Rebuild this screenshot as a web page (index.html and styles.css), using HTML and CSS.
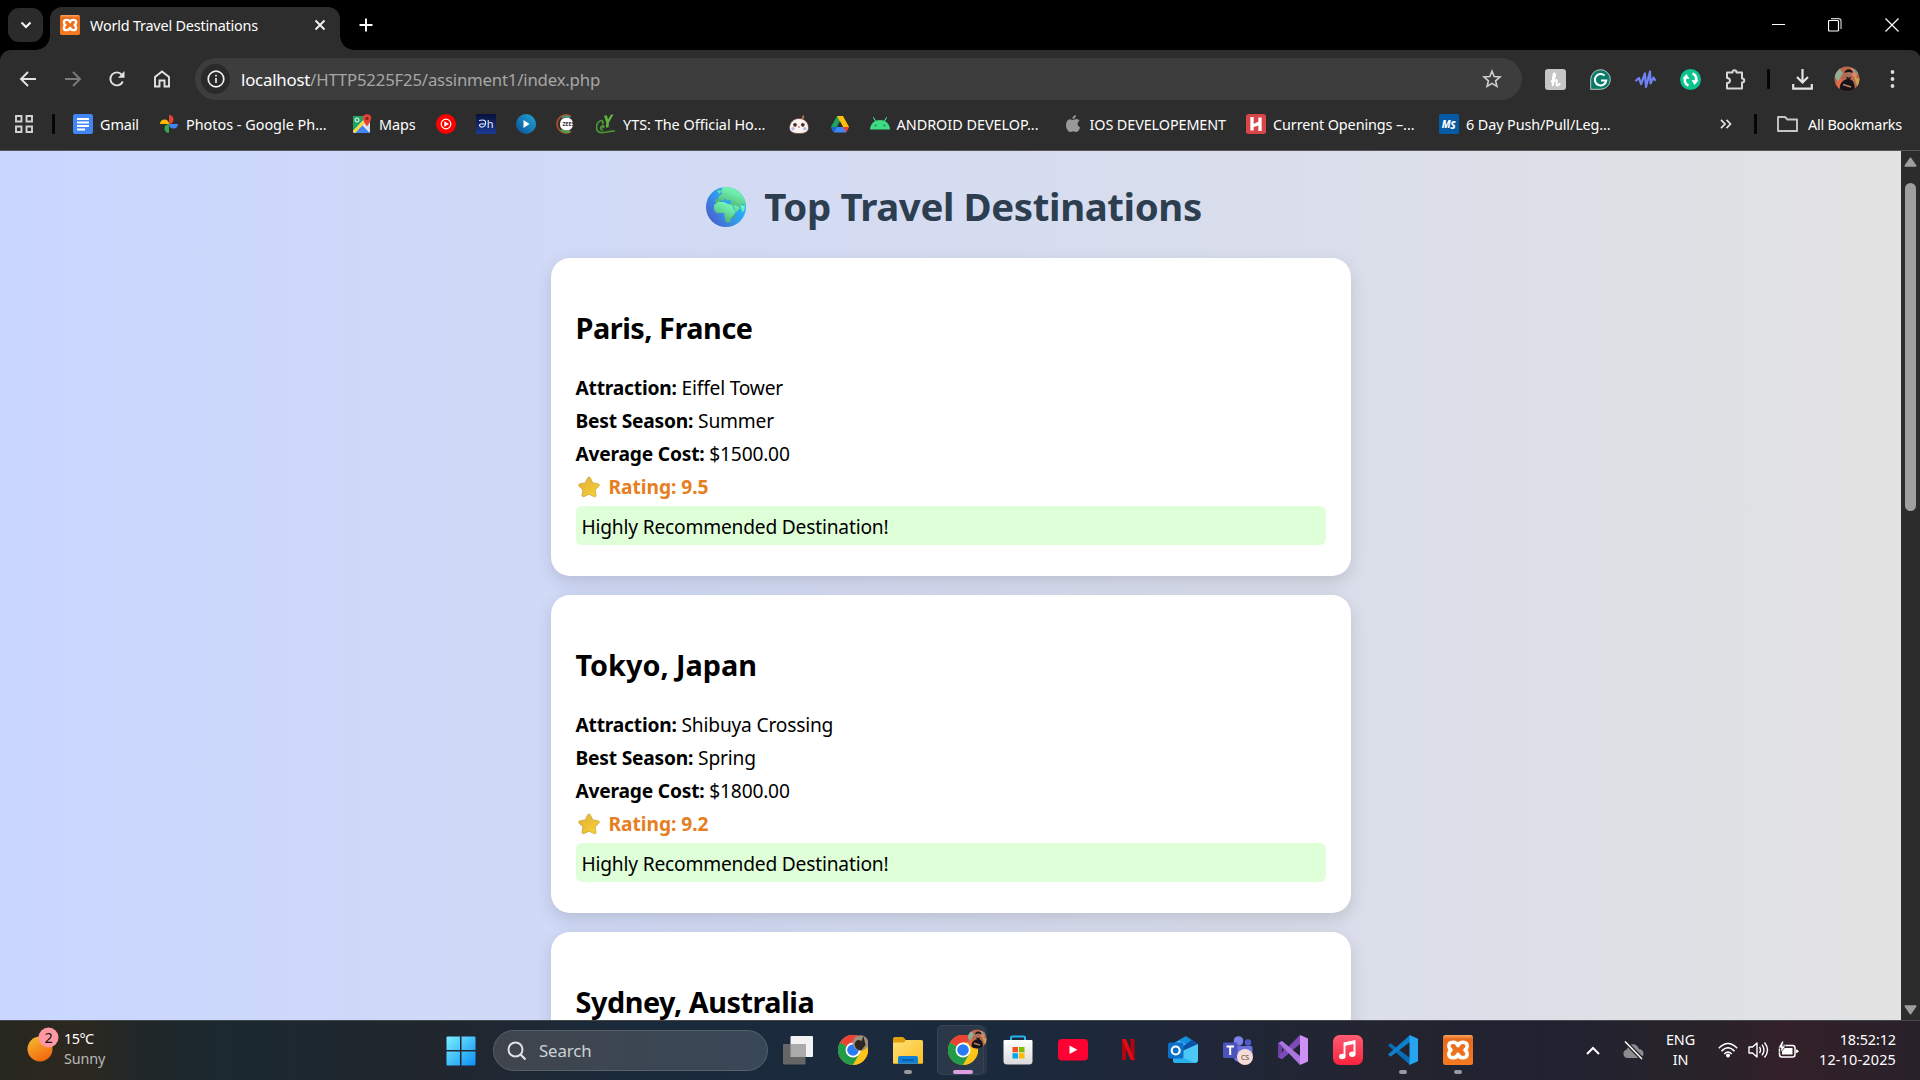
FILE: index.html
```
<!DOCTYPE html>
<html lang="en">
<head>
<meta charset="utf-8">
<title>World Travel Destinations</title>
<link rel="stylesheet" href="styles.css">
</head>
<body>
<svg class="defs" aria-hidden="true">
  <defs>
    <linearGradient id="gWin" x1="0" y1="0" x2="1" y2="1"><stop offset="0" stop-color="#7cf0ff"/><stop offset="1" stop-color="#0a90f5"/></linearGradient>
    <linearGradient id="gSun" x1="0.2" y1="0" x2="0.7" y2="1"><stop offset="0" stop-color="#f5b82e"/><stop offset="1" stop-color="#f2640c"/></linearGradient>
    <linearGradient id="gFolder" x1="0" y1="0" x2="1" y2="1"><stop offset="0" stop-color="#ffdf78"/><stop offset="1" stop-color="#fbbf22"/></linearGradient>
    <linearGradient id="gMusic" x1="0" y1="0" x2="0" y2="1"><stop offset="0" stop-color="#fb5c74"/><stop offset="1" stop-color="#fa233b"/></linearGradient>
    <linearGradient id="gEarth" x1="0.9" y1="0.2" x2="0.1" y2="0.8"><stop offset="0" stop-color="#22bdf8"/><stop offset="0.5" stop-color="#329bee"/><stop offset="1" stop-color="#4663cf"/></linearGradient>
    <linearGradient id="gLand" x1="0.8" y1="0" x2="0.3" y2="1"><stop offset="0" stop-color="#78feb6"/><stop offset="0.35" stop-color="#6be8a6"/><stop offset="1" stop-color="#4ba564"/></linearGradient>
    <linearGradient id="gStar" x1="0" y1="0" x2="1" y2="1"><stop offset="0" stop-color="#e3b437"/><stop offset="0.55" stop-color="#eec037"/><stop offset="1" stop-color="#f8db31"/></linearGradient>
    <linearGradient id="gDh" x1="0" y1="0" x2="0" y2="1"><stop offset="0" stop-color="#06103a"/><stop offset="1" stop-color="#1c3a94"/></linearGradient>
    <linearGradient id="gPlay" x1="1" y1="0" x2="0" y2="1"><stop offset="0" stop-color="#1fa8d8"/><stop offset="1" stop-color="#0d4f94"/></linearGradient>
    <linearGradient id="gBag" x1="0" y1="0" x2="0" y2="1"><stop offset="0" stop-color="#fff"/><stop offset="1" stop-color="#dadada"/></linearGradient>
    <linearGradient id="gXampp" x1="0" y1="0" x2="0" y2="1"><stop offset="0" stop-color="#f9a765"/><stop offset="0.14" stop-color="#e86a1a"/><stop offset="1" stop-color="#f47b23"/></linearGradient>
    <clipPath id="cAvatar"><circle cx="13" cy="13" r="12.5"/></clipPath>
    <clipPath id="cEarth"><circle cx="20" cy="20" r="20"/></clipPath>
  </defs>
  <symbol id="chrome" viewBox="0 0 30 30">
    <circle cx="15" cy="15" r="15" fill="#fbbc05"/>
    <path d="M15 15 L2 7.5 A15 15 0 0 1 28 7.500 Z" fill="#ea4335"/>
    <path d="M15 15 L2 7.5 A15 15 0 0 0 15 30 L21.500 18.700Z" fill="#229b4a"/>
    <path d="M15 7.500 H28 A15 15 0 0 1 15 30 L21.500 18.700 Z" fill="#fcc31a"/>
    <circle cx="15" cy="15" r="7.500" fill="#fff"/><circle cx="15" cy="15" r="5.800" fill="#2a7af3"/>
  </symbol>
  <symbol id="xampp" viewBox="0 0 30 30">
    <rect width="30" height="30" rx="2.500" fill="url(#gXampp)"/>
    <path d="M15 10.600C13.500 6 5.800 6.200 5.800 11c0 2 .9 3 2.200 4-1.300 1-2.200 2-2.200 4 0 4.800 7.700 5 9.200.4 1.500 4.600 9.200 4.400 9.200-.4 0-2-.9-3-2.200-4 1.300-1 2.200-2 2.200-4 0-4.800-7.700-5-9.200-.4z" fill="none" stroke="#fff" stroke-width="3.600" stroke-linejoin="round"/>
  </symbol>
  <symbol id="avatar" viewBox="0 0 26 26">
    <g clip-path="url(#cAvatar)">
      <rect width="26" height="26" fill="#b9694f"/><path d="M0 9l5-7 4 5-5 9z" fill="#8fae92"/><path d="M17 2l7 3-2 7-5-3z" fill="#e0876a"/><path d="M2 17l5-5 2 4-4 7z" fill="#e8694a"/><path d="M20 11l6 2-2 9z" fill="#c9a44c"/><path d="M19 3l3-2 3 6-3 1z" fill="#6f9a8a"/>
      <path d="M6 26c-1-7 1-12 8-13 6 0 7 6 7 13z" fill="#17131a"/><circle cx="14.500" cy="8.500" r="3.600" fill="#a8705a"/><path d="M10.500 7c0-5 8.500-5 8.500 0-3-1.500-5.500-1.500-8.500 0zM12 10.500c1.500 1.500 3.500 1.500 5 0l-1 3h-3z" fill="#1b1415"/><path d="M9 18.500l8 2.500" stroke="#bb8064" stroke-width="1.800"/>
    </g>
  </symbol>
  <symbol id="star" viewBox="0 0 22 22"><path d="M11 1c.8 0 1.200.6 1.500 1.200l2.300 4.700 5.100.8c1.400.2 1.900 1.500.9 2.500l-3.700 3.700.9 5.200c.2 1.400-.9 2.100-2.100 1.500L11 18.200l-4.900 2.400c-1.200.6-2.300-.1-2.100-1.500l.9-5.200-3.700-3.700c-1-1-.5-2.300.9-2.500l5.100-.8 2.300-4.700C9.800 1.600 10.200 1 11 1z" fill="url(#gStar)" stroke="#c99a33" stroke-width=".7"/></symbol>
</svg>

<header class="tabstrip">
  <button class="tab-search"><svg width="12" height="8" viewBox="0 0 12 8"><path d="M1.500 1.500L6 6l4.500-4.500" fill="none" stroke="#fff" stroke-width="2"/></svg></button>
  <div class="tab">
    <svg width="20" height="20"><use href="#xampp"/></svg>
    <span class="tab-title">World Travel Destinations</span>
    <svg class="tab-close" width="12" height="12" viewBox="0 0 12 12"><path d="M1.500 1.500l9 9M10.500 1.500l-9 9" stroke="#f0f0f0" stroke-width="1.900"/></svg>
  </div>
  <svg class="new-tab" width="14" height="14" viewBox="0 0 14 14"><path d="M7 .5v13M.5 7h13" stroke="#fff" stroke-width="1.900"/></svg>
  <div class="window-buttons">
    <svg width="14" height="14" viewBox="0 0 14 14"><path d="M0 6.500h13" stroke="#fff"/></svg>
    <svg width="14" height="14" viewBox="0 0 14 14"><rect x=".5" y="2.500" width="10" height="10.500" rx="1" fill="none" stroke="#fff" stroke-width="1.200"/><path d="M3 .7h7.500q2.500 0 2.500 2.500V11" fill="none" stroke="#ccc" stroke-width="1.200"/></svg>
    <svg width="14" height="14" viewBox="0 0 14 14"><path d="M.5 .5l13 13M13.500 .5l-13 13" stroke="#fff" stroke-width="1.200"/></svg>
  </div>
</header>

<nav class="toolbar">
  <div class="nav-buttons">
    <svg width="18" height="18" viewBox="0 0 18 18"><path d="M17 9H2.500M9 2L2 9l7 7" fill="none" stroke="#e3e3e3" stroke-width="1.900"/></svg>
    <svg width="18" height="18" viewBox="0 0 18 18"><path d="M1 9h14.500M9 2l7 7-7 7" fill="none" stroke="#7b7b7b" stroke-width="1.900"/></svg>
    <svg width="18" height="18" viewBox="0 0 18 18"><path d="M14.800 11.500A6.500 6.500 0 1 1 13.800 4.600L15.500 6.500" fill="none" stroke="#e3e3e3" stroke-width="1.900"/><path d="M16.500 1v6.700H10z" fill="#e3e3e3"/></svg>
    <svg width="18" height="18" viewBox="0 0 18 18"><path d="M2 16.500V7l7-5.500L16 7v9.500h-4.500v-6h-5v6z" fill="none" stroke="#e3e3e3" stroke-width="1.900"/></svg>
  </div>
  <div class="omnibox">
    <span class="site-info"><svg width="18" height="18" viewBox="0 0 18 18"><circle cx="9" cy="9" r="7.800" fill="none" stroke="#eee" stroke-width="1.700"/><path d="M9 8v5M9 4.800v1.700" stroke="#eee" stroke-width="1.700"/></svg></span>
    <span class="url"><b>localhost</b>/HTTP5225F25/assinment1/index.php</span>
    <svg width="20" height="20" viewBox="0 0 20 20"><path d="M10 2.200l2.200 5.300 5.800.5-4.400 3.800 1.300 5.600L10 14.400l-4.900 3 1.300-5.600L2 8l5.800-.5z" fill="none" stroke="#cfcfcf" stroke-width="1.600"/></svg>
  </div>
  <div class="extensions">
    <svg width="21" height="21" viewBox="0 0 21 21"><rect width="21" height="21" rx="3" fill="#c5c5c5"/><path d="M6.500 12.500C9.500 10 11 6 9.700 4.500 8 3.500 8 10 7.700 17c.5-4 2-6 3.500-6 1.800.2-.8 5.300 1 5.600 1 0 1.800-.8 2.500-1.800" fill="none" stroke="#fff" stroke-width="1.900" stroke-linecap="round"/></svg>
    <svg width="21" height="21" viewBox="0 0 21 21"><path d="M.7 10.500A9.800 9.800 0 1 1 10.500 20.300H.7z" fill="#087a69" stroke="#b9c9c5" stroke-width="1"/><path d="M14.500 6.600A5.700 5.700 0 1 0 16.200 11.500H11" fill="none" stroke="#fff" stroke-width="2.100"/></svg>
    <svg width="21" height="21" viewBox="0 0 21 21"><path d="M1.200 11.500L4 9l2 6L10 4.500 11 18 15 2.500l.5 12 3-6 1.500 2.500" fill="none" stroke="#6f83f5" stroke-width="2.200" stroke-linecap="round" stroke-linejoin="round"/></svg>
    <svg width="21" height="21" viewBox="0 0 21 21"><circle cx="10.500" cy="10.500" r="10.500" fill="#0cc28f"/><path d="M8.500 16.500C4.500 15 4 11 5.500 8.500M12.500 4.500c4 1.500 4.500 5.500 3 8" fill="none" stroke="#fff" stroke-width="2.600"/><path d="M2.500 9.500l4-4.500 3 5zM18.500 11.500l-4 4.500-3-5z" fill="#fff"/></svg>
    <svg width="21" height="21" viewBox="0 0 21 21"><path d="M2 3.500h5.500c0-3 4-3 4 0H17v6c3 0 3 4 0 4V19.500H2V14c4 0 4-5 0-5z" fill="none" stroke="#d6d6d6" stroke-width="2" stroke-linejoin="round"/></svg>
    <i class="bar"></i>
    <svg width="21" height="21" viewBox="0 0 21 21"><path d="M10.500 0v13.500M5 8l5.500 5.500L16 8M1.200 15v4.700h18.600V15" fill="none" stroke="#e3e3e3" stroke-width="2.200"/></svg>
    <svg width="26" height="26"><use href="#avatar"/></svg>
    <svg width="5" height="18" viewBox="0 0 5 18"><circle cx="2.500" cy="2" r="1.900" fill="#ddd"/><circle cx="2.500" cy="9" r="1.900" fill="#ddd"/><circle cx="2.500" cy="16" r="1.900" fill="#ddd"/></svg>
  </div>
</nav>

<nav class="bookmarks">
  <svg class="apps" width="18" height="18" viewBox="0 0 18 18"><path d="M1 1h5.500v5.500H1zM11.500 1H17v5.500h-5.500zM1 11.500h5.500V17H1zM11.500 11.500H17V17h-5.500z" fill="none" stroke="#d2d2d2" stroke-width="1.900"/></svg>
  <i class="bar"></i>
  <a class="bm w86"><svg width="20" height="20" viewBox="0 0 20 20"><rect width="20" height="20" rx="2" fill="#4285f4"/><path d="M4 5h12M4 8.500h12M4 12h12M4 15.500h8" stroke="#fff" stroke-width="2"/></svg>Gmail</a>
  <a class="bm w193 wide"><svg width="20" height="20" viewBox="0 0 20 20"><path d="M10 10V1a4.500 4.500 0 0 1 0 9z" fill="#ea4335"/><path d="M10 10h9a4.500 4.500 0 0 1-9 0z" fill="#4285f4"/><path d="M10 10v9a4.500 4.500 0 0 1 0-9z" fill="#34a853"/><path d="M10 10H1a4.500 4.500 0 0 1 9 0z" fill="#fbbc04"/></svg>Photos - Google Ph...</a>
  <a class="bm w84"><svg width="20" height="20" viewBox="0 0 20 20"><rect x="1" y="2" width="17" height="17" rx="1.500" fill="#e8eaed"/><path d="M1 3.500q0-1.500 1.500-1.500H15L1 17z" fill="#1fa463"/><path d="M3 19l7-8 8 8z" fill="#4285f4"/><path d="M1 17L14 4l2 2L3 19z" fill="#fdd835"/><path d="M11 10l7 7V9z" fill="#dadce0"/><circle cx="5" cy="6" r="2" fill="none" stroke="#fff"/><path d="M15 .3c6 0 5 6 0 12-5-6-6-12 0-12z" fill="#ea4335"/><circle cx="15" cy="4.500" r="1.700" fill="#8c2219"/></svg>Maps</a>
  <a class="bm w40"><svg width="20" height="20" viewBox="0 0 20 20"><circle cx="10" cy="10" r="10" fill="#f00"/><circle cx="10" cy="10" r="4.800" fill="none" stroke="#fff" stroke-width="1.200"/><path d="M8.300 7.300v5.400L13 10z" fill="#fff"/></svg></a>
  <a class="bm w40"><svg width="20" height="20" viewBox="0 0 20 20"><rect width="20" height="20" fill="url(#gDh)"/><path d="M3 6.500c6-1.500 7 .5 6.500 3.500-.5 3.500-5.500 4-6 1.500-.2-1.500 2-2 5-1.500" fill="none" stroke="#dfe8ff" stroke-width="1.200"/><text x="14" y="13.800" text-anchor="middle" class="dh">h</text></svg></a>
  <a class="bm w40"><svg width="20" height="20" viewBox="0 0 20 20"><circle cx="10" cy="10" r="10" fill="url(#gPlay)"/><path d="M7.500 6v8l6-4z" fill="#fff"/></svg></a>
  <a class="bm w40"><svg width="20" height="20" viewBox="0 0 20 20"><path d="M15 2.500A9 9 0 1 0 15 17.500" fill="none" stroke="#a4502e" stroke-width="1.800"/><path d="M14 3.500a7.500 7.500 0 0 0-8 0" stroke="#3aa88a" stroke-width="1.500" fill="none"/><path d="M5 16a8 8 0 0 0 9 1" stroke="#48a548" stroke-width="2" fill="none"/><circle cx="10.500" cy="10" r="6.600" fill="#fff"/><text x="12.500" y="12.200" text-anchor="middle" class="beans">ZEES</text></svg></a>
  <a class="bm w192 wide"><svg width="20" height="20" viewBox="0 0 20 20"><path d="M8 1.500h3l1 4 3-5h2.500L13 8.500l-.5 5H9.800l.5-4.500z" fill="#5fb43c"/><path d="M5 6.500C-1 9-1 18 5 18.500c4 .5 7-1.500 14-1.500M5 6.500c2.500 0 2.500 3 1 3.500M6 14c3-1 2-3 0-2s-2 4 1 4.500" fill="none" stroke="#4d9a35" stroke-width="1.700"/></svg>YTS: The Official Ho...</a>
  <a class="bm w41"><svg width="20" height="20" viewBox="0 0 20 20"><path d="M12 5.500q3-1 2-4" fill="none" stroke="#b9794d" stroke-width="1.700"/><path d="M10 4.500C4 4.500.5 9 .5 14c0 3.500 3 5.500 9.500 5.500s9.500-2 9.500-5.500c0-5-3.500-9.500-9.500-9.500z" fill="#fdf4ef" stroke="#6b4038" stroke-width=".7"/><circle cx="6" cy="10.800" r="1.900" fill="#4b2e2a"/><circle cx="13.800" cy="10.800" r="1.900" fill="#4b2e2a"/><circle cx="4" cy="14.800" r="1.700" fill="#bdb8f5"/><circle cx="15.800" cy="14.800" r="1.700" fill="#bdb8f5"/><path d="M9 13h2" stroke="#b55"/></svg></a>
  <a class="bm w40"><svg width="20" height="20" viewBox="0 0 20 20"><path d="M7 2h6l-3 5.500-4.700 8.300L3.500 18 1 13z" fill="#1ea362"/><path d="M7 2h6l6 11h-6z" fill="#ffc107"/><path d="M1 13h18l-3 5.500H4z" fill="#4285f4"/><path d="M7 13l3-5.500L13 13z" fill="#2d2d2d"/><path d="M13 13h6l-3 5.500z" fill="#ea4335"/><path d="M7 13H1l3 5.500z" fill="#1967d2"/></svg></a>
  <a class="bm w193 wide"><svg width="20" height="20" viewBox="0 0 20 20"><path d="M0 15.500C.5 9 5 6 10 6s9.500 3 10 9.500z" fill="#3ddc84"/><path d="M5.500 7L3.300 3.300M14.500 7l2.200-3.700" stroke="#3ddc84" stroke-width="1.100"/><circle cx="5.600" cy="11.500" r="1" fill="#285"/><circle cx="14.400" cy="11.500" r="1" fill="#285"/></svg>ANDROID DEVELOP...</a>
  <a class="bm w183"><svg width="20" height="20" viewBox="0 0 20 20"><path d="M13 1c.2 2.200-1.700 4-3.500 4C9.200 3 11 1.200 13 1zM9.900 6c.8 0 1.800-1 3.400-1 1.300 0 2.500.7 3.200 1.800-2.800 1.500-2.300 5.500.6 6.600-.8 2.400-2.300 4.600-3.800 4.600-1.200 0-1.600-.8-3.100-.8s-2 .8-3.100.8C5 18 2.800 13.800 3 10.700 3.100 7.500 5 5.300 7 5.200 8.400 5.200 9.200 6 9.900 6z" fill="#999"/></svg>IOS DEVELOPEMENT</a>
  <a class="bm w193"><svg width="20" height="20" viewBox="0 0 20 20"><rect width="20" height="20" rx="2.500" fill="#d9464a"/><path d="M6 3v13.500M14 3.500V17M6 11.500c3 .5 5-1 8-3" fill="none" stroke="#fff" stroke-width="3.300"/></svg>Current Openings –...</a>
  <a class="bm w193"><svg width="20" height="20" viewBox="0 0 20 20"><rect width="20" height="20" rx="1.500" fill="#045aa4"/><text x="9.500" y="13.500" text-anchor="middle" class="ms">M<tspan dy="1.500">S</tspan></text></svg>6 Day Push/Pull/Leg...</a>
  <div class="bm-end">
    <svg width="12" height="10" viewBox="0 0 12 10"><path d="M1 .8L5 5 1 9.200M6.500 .8l4 4.200-4 4.200" fill="none" stroke="#e3e3e3" stroke-width="1.700"/></svg>
    <i class="bar"></i>
    <svg width="21" height="16" viewBox="0 0 21 16"><path d="M1 1h7l2.500 2.500H20V15H1z" fill="none" stroke="#c7c7c7" stroke-width="1.900" stroke-linejoin="round"/></svg>
    <span>All Bookmarks</span>
  </div>
</nav>

<div class="viewport">
  <main>
    <h1><svg width="40" height="40" viewBox="0 0 40 40"><circle cx="20" cy="20" r="20" fill="url(#gEarth)"/><g clip-path="url(#cEarth)" fill="url(#gLand)"><path d="M11 4l3-1 1 2-2 2zM17 0h14l9 10v9l-3-2-3 1-2 4-3-1-1-3-2 1-2-3 2-2-3-1-2 1-2-3-1 3-3-1-1 2-4 1-1-3 3-1 1-3 3-2-1-3z"/><path d="M8 18l4-3 6 0 4 2 4 1 2 5 2 1-3 5-2 2-1 4-3 1-2-3-1-7-7 0-3-3z"/><path d="M27 18l4 1 3 2-3 4-2-1zM34 18l5 1-1 5-2 1zM27 28l2-1v4l-2 1z"/></g></svg><span>Top Travel Destinations</span></h1>

    <section class="card">
      <h2>Paris, France</h2>
      <p><strong>Attraction:</strong> Eiffel Tower</p>
      <p><strong>Best Season:</strong> Summer</p>
      <p><strong>Average Cost:</strong> $1500.00</p>
      <p class="rating"><svg width="22" height="22"><use href="#star"/></svg>Rating: 9.5</p>
      <div class="note">Highly Recommended Destination!</div>
    </section>
    <section class="card">
      <h2 class="loose">Tokyo, Japan</h2>
      <p><strong>Attraction:</strong> Shibuya Crossing</p>
      <p><strong>Best Season:</strong> Spring</p>
      <p><strong>Average Cost:</strong> $1800.00</p>
      <p class="rating"><svg width="22" height="22"><use href="#star"/></svg>Rating: 9.2</p>
      <div class="note">Highly Recommended Destination!</div>
    </section>
    <section class="card">
      <h2>Sydney, Australia</h2>
    </section>
  </main>
  <div class="scrollbar">
    <svg width="13" height="10" viewBox="0 0 13 10"><path d="M6.500 1.200L11.800 9H1.200z" fill="#9f9f9f" stroke="#9f9f9f" stroke-width="1.500" stroke-linejoin="round"/></svg>
    <div class="track"><div class="thumb"></div></div>
    <svg width="13" height="10" viewBox="0 0 13 10"><path d="M6.500 8.800L1.200 1h10.600z" fill="#9f9f9f" stroke="#9f9f9f" stroke-width="1.500" stroke-linejoin="round"/></svg>
  </div>
</div>

<footer class="taskbar">
  <div class="weather">
    <svg width="34" height="36" viewBox="0 0 34 36"><circle cx="13" cy="22" r="12.500" fill="url(#gSun)"/><circle cx="21.500" cy="10.500" r="10" fill="#fe99a4"/><text x="21.500" y="15.500" text-anchor="middle" class="badge">2</text></svg>
    <div><div class="temp">15°C</div><div class="cond">Sunny</div></div>
  </div>
  <svg class="start" width="30" height="30" viewBox="0 0 30 30"><path d="M.5 1.500q0-1 1-1H14V14H.500zM15.500.500h13q1 0 1 1V14h-14zM.500 15.500H14v14H1.500q-1 0-1-1zM15.500 15.500h14v13q0 1-1 1h-13z" fill="url(#gWin)"/></svg>
  <div class="search"><svg width="20" height="20" viewBox="0 0 20 20"><circle cx="8.500" cy="8.500" r="7" fill="none" stroke="#dfe2e5" stroke-width="2"/><path d="M13.500 13.500l5 5" stroke="#dfe2e5" stroke-width="2.300"/></svg><span>Search</span></div>
  <div class="apps-row">
    <span class="app"><svg width="30" height="30" viewBox="0 0 30 30"><rect x="7.500" y="1" width="22.500" height="21" rx="1" fill="#f2f2f2"/><rect x="0" y="9" width="22.500" height="20.500" rx="1" fill="#666"/><rect x="7.500" y="9" width="15" height="13" fill="#aaa"/></svg></span>
    <span class="app"><svg width="30" height="30" viewBox="0 0 30 30"><use href="#chrome"/><g transform="translate(14.500 0)"><circle cx="8" cy="8" r="7.800" fill="#9c907c"/><path d="M2 9q2-6 7-3l2-5 2 9-4 5q-6 1-7-6z" fill="#302722"/></g></svg></span>
    <span class="app running"><svg width="30" height="30" viewBox="0 0 30 30"><path d="M0 4q0-2 2-2h8l3 3v4H0z" fill="#dfa10a"/><path d="M0 7.500h11l2-2.500h15.500q1.500 0 1.500 1.500V28q0 .8-.8.8H.800Q0 28.800 0 28z" fill="url(#gFolder)"/><path d="M5 28.800V23q0-2 2-2h16q2 0 2 2v5.800z" fill="#0f7fd6"/><path d="M9 25h12" stroke="#075094" stroke-width="1.200"/></svg></span>
    <span class="app active"><svg width="30" height="30"><use href="#chrome"/></svg><svg class="profile" width="20" height="20" viewBox="0 0 26 26"><use href="#avatar" width="26" height="26"/></svg></span>
    <span class="app"><svg width="30" height="30" viewBox="0 0 30 30"><path d="M8 7V2.500q0-1 1-1h12q1 0 1 1V7" fill="none" stroke="#26b4f0" stroke-width="2"/><path d="M.5 6q0-1 1-1h27q1 0 1 1v20q0 3.500-3.500 3.500H4Q.500 29.500.500 26z" fill="url(#gBag)"/><path d="M9.500 12H15v5.300H9.500z" fill="#f25022"/><path d="M16 12h5.500v5.300H16z" fill="#7fba00"/><path d="M9.500 18.200H15v5.300H9.500z" fill="#00a4ef"/><path d="M16 18.200h5.500v5.300H16z" fill="#ffb900"/></svg></span>
    <span class="app"><svg width="30" height="30" viewBox="0 0 30 30"><rect y="4" width="30" height="21.500" rx="4" fill="#ff0033"/><path d="M11.500 10.500v8.500l8-4.200z" fill="#fff"/></svg></span>
    <span class="app"><svg width="30" height="30" viewBox="0 0 30 30"><path d="M9 4h4v20.700l-4 .5zM17.500 4h4v21.200l-4-.5z" fill="#b1060f"/><path d="M9 4h4l8.500 21.200-4-.5z" fill="#e50914"/></svg></span>
    <span class="app"><svg width="30" height="30" viewBox="0 0 30 30"><path d="M4 9L17 1.500q.8-.4 1.600 0L30 9v9H4z" fill="#1490df"/><path d="M11 5.500l8 4.500-10 7-4-7z" fill="#54b8f5"/><path d="M24 5l6 4-13 9-6-4z" fill="#0b4fa8"/><path d="M30 9v16q0 3-3 3H8q-3 0-3-3v-5z" fill="#4bc8f7"/><path d="M5 18l22 10H8q-3 0-3-3z" fill="#2bb0ee"/><rect y="7.500" width="15.500" height="16" rx="2" fill="#0a70c9"/><circle cx="7.700" cy="15.500" r="4" fill="none" stroke="#fff" stroke-width="2.200"/></svg></span>
    <span class="app"><svg width="30" height="30" viewBox="0 0 30 30"><circle cx="15.500" cy="6" r="4.800" fill="#7b83eb"/><circle cx="25" cy="7.500" r="3.200" fill="#5059c9"/><path d="M9 11h19q1.500 0 1.500 1.500V19c0 5-3 6-7 5-2 5-11 4-12-2z" fill="#6a72dc"/><rect y="7.500" width="14.500" height="15.500" rx="1.500" fill="#4b53bc"/><path d="M3.500 11.500h7.500M7.200 11.500V20" stroke="#fff" stroke-width="2"/><circle cx="22" cy="22" r="8" fill="#f6dcd6"/><text x="22" y="24.700" text-anchor="middle" class="cs">CS</text></svg></span>
    <span class="app"><svg width="30" height="30" viewBox="0 0 30 30"><path d="M0 8l4-2v18l-4-2z" fill="#6c3fa4"/><path d="M4 6l6 5v8l-6 5-4-2 6-7-6-7z" fill="#7846b0"/><path d="M22 0v9L4 24l-4-2z" fill="#7d4bb6"/><path d="M4 6l18 15v9L1 8z" fill="#aa76de"/><path d="M22 0l8 3.500v23L22 30z" fill="#cf91f6"/></svg></span>
    <span class="app"><svg width="30" height="30" viewBox="0 0 30 30"><rect width="30" height="30" rx="6.500" fill="url(#gMusic)"/><path d="M11.500 21V8.500L21.500 6.500v12.500" fill="none" stroke="#fff" stroke-width="1.900"/><path d="M11 7.500l11-2.300v3.600l-11 2.300z" fill="#fff"/><ellipse cx="9.300" cy="21.500" rx="3.200" ry="2.700" fill="#fff"/><ellipse cx="19.300" cy="19.300" rx="3.200" ry="2.700" fill="#fff"/></svg></span>
    <span class="app running"><svg width="30" height="30" viewBox="0 0 30 30"><path d="M0 10.500L2.500 8.200 22 23v7z" fill="#0a6cb5"/><path d="M0 19.500l2.500 2.300L22 7V0z" fill="#0f80cb"/><path d="M21.500 0L30 3.700v22.600L21.500 30z" fill="#27a5f0"/></svg></span>
    <span class="app running"><svg width="30" height="30"><use href="#xampp"/></svg></span>
  </div>
  <div class="tray">
    <svg class="chev" width="14" height="9" viewBox="0 0 14 9"><path d="M1 8l6-6 6 6" fill="none" stroke="#fff" stroke-width="2"/></svg>
    <svg class="cloud" width="21" height="19" viewBox="0 0 21 19"><path d="M5 17c-6 0-6-8-1-8.500C5 2 14 1 16 8c6 0 6 9 0 9z" fill="#8c8c8e"/><path d="M2 .5l17 17.500" stroke="#262229" stroke-width="4"/><path d="M2 .5l17 17.500" stroke="#fff" stroke-width="1.500"/></svg>
    <div class="lang">ENG<br>IN</div>
    <svg class="wifi" width="20" height="16" viewBox="0 0 20 16"><g fill="none" stroke="#fff" stroke-width="1.500"><path d="M.8 6.300q9.200-9.600 18.400 0M3.500 9.200q6.500-7 13 0M6.300 12q3.700-4 7.400 0"/></g><circle cx="10" cy="13.500" r="2" fill="#fff"/></svg>
    <svg class="vol" width="21" height="18" viewBox="0 0 21 18"><g fill="none" stroke="#fff" stroke-width="1.400" stroke-linejoin="round"><path d="M1 6h3.500L9 2v14l-4.500-4H1zM11.500 6q2 3 0 6M14 3.700q4 5.300 0 10.600M16.500 1.500q6 7.500 0 15"/></g></svg>
    <svg class="batt" width="21" height="18" viewBox="0 0 21 18"><rect x="1.500" y="4.500" width="15.500" height="11.500" rx="2.500" fill="none" stroke="#fff" stroke-width="1.500"/><rect x="4" y="7" width="10.500" height="6.500" fill="#fff"/><path d="M18 8.500v3.500q2.500 0 2.500-1.800T18 8.500z" fill="#fff"/><path d="M4 0L0 7h3l-1 5 6-7H4.500L6 0z" fill="#fff" stroke="#2a2229" stroke-width=".8"/></svg>
    <div class="clock">18:52:12<br><span>12-10-2025</span></div>
  </div>
</footer>
</body>
</html>
```
FILE: styles.css
```
* { box-sizing: border-box; }
body {
  margin: 0;
  width: 1920px;
  height: 1080px;
  overflow: hidden;
  display: grid;
  grid-template-rows: 50px 58px 43px 869px 60px;
  background: #000;
  color: #fff;
  font-family: "Noto Sans", "Open Sans", sans-serif;
  font-size: 14.4px;
  letter-spacing: -0.1px;
}
svg { display: block; flex: none; }
.defs { position: absolute; width: 0; height: 0; }
.bar { flex: none; width: 3px; height: 20px; border-radius: 1px; background: #050505; }

/* tab strip */
.tabstrip { display: flex; padding-left: 8px; background: #000; }
.tab-search {
  width: 35px; height: 34px; margin-top: 8px; padding: 0;
  border: 0; border-radius: 11px; background: #2b2b2b;
  display: grid; place-items: center;
}
.tab {
  position: relative;
  display: flex; align-items: center;
  width: 290px; height: 43px; margin: 7px 0 0 7px; padding: 0 14px 7px 10px;
  border-radius: 12px 12px 0 0; background: #2d2d2d;
}
.tab::before, .tab::after {
  content: ""; position: absolute; bottom: 0; width: 14px; height: 14px;
}
.tab::before { left: -14px; background: radial-gradient(circle at 0 0, transparent 13.5px, #2d2d2d 14px); }
.tab::after { right: -14px; background: radial-gradient(circle at 100% 0, transparent 13.5px, #2d2d2d 14px); }
.tab-title { margin-left: 10px; letter-spacing: -0.19px; }
.tab-close { margin-left: auto; }
.new-tab { margin: 18px 0 0 19px; }
.window-buttons { display: flex; gap: 42.5px; margin: 18px 22.5px 0 auto; }

/* address bar */
.toolbar {
  display: flex; align-items: center; padding: 0 26px 0 19px;
  border-radius: 11px 11px 0 0; background: #2d2d2d;
}
.nav-buttons { display: flex; gap: 26.7px; width: 153px; }
.omnibox {
  display: flex; align-items: center;
  width: 1327px; height: 42px; margin: 0 23px; padding: 0 20px 0 6px;
  border-radius: 21px; background: #3d3d3d;
}
.site-info { display: grid; place-items: center; width: 29px; height: 30px; border-radius: 50%; background: #2a2a2a; }
.url { flex: 1; margin-left: 11px; font-size: 16.8px; letter-spacing: -0.2px; color: #a6a6a6; }
.url b { font-weight: 400; color: #fff; }
.extensions { display: flex; align-items: center; flex: 1; gap: 24px; }
.extensions .bar { margin: 0 -4px 0 -3px; }
.extensions .bar + svg { margin-left: 2px; }
.extensions svg:nth-last-child(2) { margin: 0 6px 0 -3px; }

/* bookmarks */
.bookmarks {
  display: flex; align-items: center; padding: 0 19px 10px 15px;
  background: #2d2d2d; border-bottom: 1px solid #565656;
}
.bookmarks > .bar { margin: 0 18px 0 19px; }
.bm { display: flex; align-items: center; gap: 7px; flex: none; white-space: nowrap; }
.wide { letter-spacing: 0; }
.w40 { width: 40px; }
.w41 { width: 41px; }
.w84 { width: 84px; }
.w86 { width: 86px; }
.w183 { width: 183.5px; }
.w192 { width: 192.5px; }
.w193 { width: 193px; }
.bm-end { display: flex; align-items: center; margin-left: auto; white-space: nowrap; }
.bm-end .bar { margin: 0 20px 0 22px; }
.bm-end span { margin-left: 10px; letter-spacing: -0.22px; }
.dh { font-size: 11px; fill: #e6eeff; }
.beans { font-size: 5.5px; font-weight: 700; fill: #333; }
.ms { font-size: 10px; font-weight: 800; font-style: italic; fill: #fff; letter-spacing: -0.5px; }

/* page */
.viewport { display: flex; overflow: hidden; }
main {
  flex: 1; padding-top: 30px; overflow: hidden;
  display: flex; flex-direction: column; align-items: center;
  background: linear-gradient(to right, #c9d6ff, #e2e2e2);
  color: #000; font-size: 19.2px; letter-spacing: -0.2px;
}
h1 {
  flex: none; display: flex; align-items: center; justify-content: center;
  height: 50px; margin: 0 0 27.3px; padding-left: 7px;
  color: #2c3e50; font-size: 38.4px; line-height: 50px; letter-spacing: -0.38px; white-space: nowrap;
}
h1 svg { margin: 1px 18px 0 0; }
.card {
  flex: none; width: 800px; margin-bottom: 19px; padding: 50px 25px 31.2px;
  border-radius: 19px; background: #fff;
  box-shadow: 0 6px 17px rgba(0, 0, 0, 0.13);
}
.card h2 { margin: 0 0 22.3px; font-size: 28.8px; line-height: 40px; letter-spacing: -0.45px; }
.card h2.loose { letter-spacing: 0; }
.card p { margin: 0; line-height: 33.25px; }
.rating { display: flex; align-items: center; color: #e67e22; font-weight: 700; letter-spacing: -0.04px; }
.rating svg { margin: 0 9px 0 2px; }
.note {
  height: 39.5px; margin-top: 2px; padding: 3.5px 6px 0;
  border-radius: 6px; background: #dfffd8; line-height: 36px;
}
.scrollbar { display: flex; flex-direction: column; align-items: center; width: 20px; padding: 6px 1px 5px 0; background: #2c2c2c; }
.track { flex: 1; padding-top: 16px; }
.thumb { width: 11px; height: 328px; border-radius: 6px; background: #9f9f9f; }

/* taskbar */
.taskbar {
  display: flex; align-items: flex-start;
  border-top: 1px solid #44484a;
  background: linear-gradient(to right, #26271f 0, #2d281f 75px, #212728 140px, #1b2930 220px, #21262e 430px, #1a2a3b 640px, #1b293c 1000px, #1f2739 1180px, #23242f 1400px, #202232 1540px, #282329 1700px, #332028 1790px, #28212a 1920px);
}
.weather { display: flex; width: 446px; padding: 6px 0 0 27px; }
.weather svg { margin-right: 3px; }
.temp { line-height: 20px; margin-top: 2px; letter-spacing: -0.5px; }
.cond { line-height: 20px; color: #b9b9b9; letter-spacing: -0.15px; }
.badge { font-size: 14.5px; fill: #111; }
.start { margin-top: 15px; }
.search {
  display: flex; align-items: center; width: 275px; height: 41px; margin: 9px 0 0 17px; padding-left: 13px;
  border: 1px solid #56606b; border-radius: 21px;
  background: linear-gradient(to right, #40454d, #384757);
  font-size: 16.8px; color: #cdd1d6;
}
.search span { margin-left: 12px; }
.apps-row { display: flex; margin: 4px 0 0 2px; }
.app { position: relative; width: 55px; height: 50px; display: flex; justify-content: center; padding-top: 10px; }
.running::after, .active::after {
  content: ""; position: absolute; bottom: 1px; left: 24px; width: 8px; height: 4px; border-radius: 2px; background: #969aa0;
}
.active::before {
  content: ""; position: absolute; inset: 0 6px 0 2px; border-radius: 5px; background: rgba(255, 255, 255, 0.07);
  border: 1px solid rgba(255, 255, 255, 0.06); box-shadow: 4px 0 0 -1px rgba(255, 255, 255, 0.06);
}
.active::after { left: 18px; width: 20px; background: #dc9fe0; }
.active > svg { position: relative; }
.active > .profile { position: absolute; right: 3px; top: 4px; }
.cs { font-size: 7px; fill: #5a4440; }
.tray { display: flex; align-items: center; height: 58px; margin: 0 25px 0 auto; text-align: center; line-height: 20px; }
.cloud { margin-left: 23px; }
.lang { width: 31px; margin: 0 22px 0 21px; }
.vol { margin-left: 10px; }
.batt { margin-left: 9px; }
.clock { width: 79px; margin-left: 18px; text-align: right; letter-spacing: -0.1px; }
.clock span { letter-spacing: 0.19px; }
```
